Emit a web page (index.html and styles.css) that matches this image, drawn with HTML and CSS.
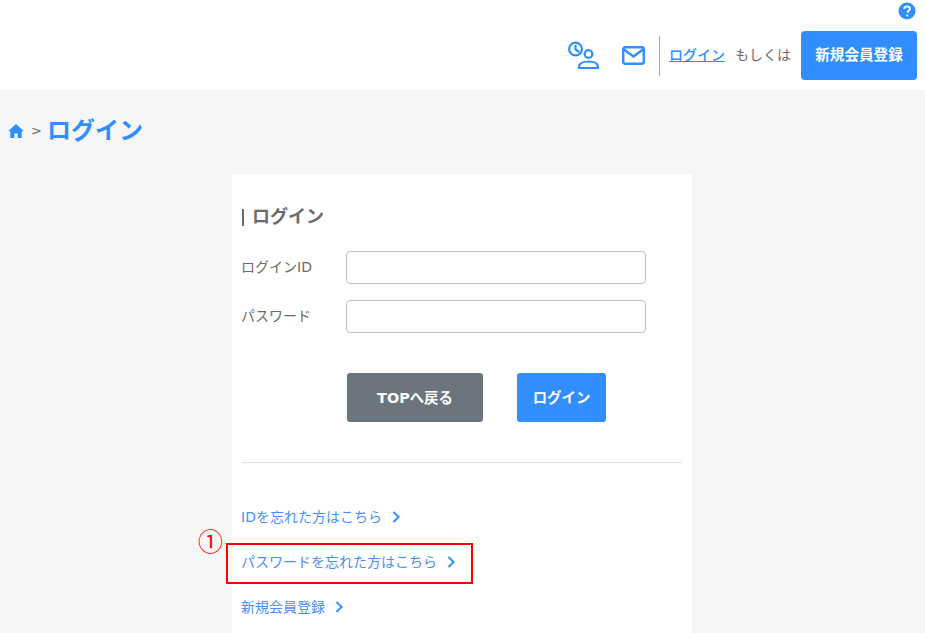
FILE: index.html
```html
<!DOCTYPE html>
<html lang="ja">
<head>
<meta charset="utf-8">
<title>ログイン</title>
<link rel="stylesheet" href="styles.css">
</head>
<body>
<header class="header">
  <div class="help-row">
    <svg class="help" viewBox="0 0 18 18" width="18" height="18"><circle cx="9" cy="9" r="8.500" fill="#308efe"/><path d="M6.200 7c0-1.700 1.200-2.700 2.900-2.700 1.600 0 2.800 1 2.800 2.400 0 2-2.500 2-2.500 4" fill="none" stroke="#fff" stroke-width="1.800"/><circle cx="9.300" cy="13.600" r="1.100" fill="#fff"/></svg>
  </div>
  <div class="nav">
    <svg class="icon-history" viewBox="0 0 32 30" width="32" height="30"><g fill="none" stroke="#308efe" stroke-width="2.200"><circle cx="7.500" cy="8" r="6.400"/><path d="M7.500 4v4.500l3.500 2.500"/><circle cx="20.500" cy="13" r="3.800"/><path d="M11 27v-1c0-3.500 4-5.500 9.500-5.500s9.500 2 9.500 5.500v1z"/></g></svg>
    <svg class="icon-mail" viewBox="0 0 23 19" width="23" height="19"><rect x="1.200" y="1.200" width="20.600" height="16.600" rx="2" fill="none" stroke="#308efe" stroke-width="2.400"/><path d="M2 3.500l9.500 7 9.500-7" fill="none" stroke="#308efe" stroke-width="2.400"/></svg>
    <div class="divider"></div>
    <a class="login-link" href="#">ログイン</a>
    <span class="or">もしくは</span>
    <a class="register" href="#">新規会員登録</a>
  </div>
</header>
<main class="main">
  <div class="crumbs">
    <svg class="home" viewBox="0 0 16 14" width="16" height="14"><path d="M8 0L0 7.300h2.300V14h4v-4.500h3.400V14h4V7.300H16z" fill="#308efe"/></svg>
    <span class="sep">&gt;</span>
    <h1 class="title">ログイン</h1>
  </div>
  <section class="card">
    <h2 class="card-title">ログイン</h2>
    <div class="field"><label class="label">ログインID</label><input class="input" type="text"></div>
    <div class="field"><label class="label">パスワード</label><input class="input" type="password"></div>
    <div class="buttons">
      <a class="btn btn-gray" href="#">TOPへ戻る</a>
      <a class="btn btn-blue" href="#">ログイン</a>
    </div>
    <hr class="rule">
    <ul class="links">
      <li class="link-row"><a class="link" href="#">IDを忘れた方はこちら<svg class="chev" viewBox="0 0 8 12" width="8" height="12"><path d="M1.500 1l5 5-5 5" fill="none" stroke="#308efe" stroke-width="2"/></svg></a></li>
      <li class="link-row"><a class="link" href="#">パスワードを忘れた方はこちら<svg class="chev" viewBox="0 0 8 12" width="8" height="12"><path d="M1.500 1l5 5-5 5" fill="none" stroke="#308efe" stroke-width="2"/></svg></a>
        <div class="highlight"></div><span class="mark">①</span></li>
      <li class="link-row"><a class="link" href="#">新規会員登録<svg class="chev" viewBox="0 0 8 12" width="8" height="12"><path d="M1.500 1l5 5-5 5" fill="none" stroke="#308efe" stroke-width="2"/></svg></a></li>
    </ul>
  </section>
</main>
</body>
</html>
```
FILE: styles.css
```css
* { box-sizing: border-box; }
html, body { margin: 0; height: 633px; overflow: hidden; }
body {
  background: #f5f6f6;
  color: #6b6b6b;
  font-family: "DejaVu Sans", "Noto Sans CJK JP", sans-serif;
  font-size: 14px;
}
.header { background: #fff; height: 90px; padding: 2px 8px 0; }
.help-row { display: flex; justify-content: flex-end; height: 18px; padding-right: 1px; }
.nav { display: flex; align-items: center; justify-content: flex-end; height: 49px; margin-top: 11px; }
.icon-history { margin-right: 22px; margin-top: 1px; }
.icon-mail { margin-right: 14px; }
.divider { width: 1px; height: 40px; background: #aaa; margin-right: 9px; }
.login-link { color: #308efe; font-size: 14px; font-weight: 500; margin-right: 10px; padding-bottom: 4px; }
.or { margin-right: 10px; color: #6b6b6b; padding-bottom: 4px; }
.register {
  display: flex; align-items: center; justify-content: center;
  width: 116px; height: 49px; padding-bottom: 4px; background: #308efe; color: #fff;
  border-radius: 4px; font-size: 14.6px; font-weight: 700; text-decoration: none;
}
.main { padding: 0 8px; }
.crumbs { display: flex; align-items: center; height: 80px; }
.home { margin-right: 7px; margin-top: 2px; }
.sep { font-size: 13px; margin-right: 5px; }
.title { margin: 1px 0 0; font-size: 24px; line-height: 36px; color: #308efe; font-weight: 700; }
.card {
  width: 460px; height: 459px; margin: 4px 0 0 224px; padding: 29px 9px 0;
  background: #fff; border-radius: 3px 3px 0 0;
}
.card-title {
  margin: 0 0 20px; font-size: 18px; line-height: 28px; font-weight: 700; color: #6b6b6b;
  display: flex; align-items: center;
}
.card-title::before { content: ""; width: 2px; height: 17px; background: #6b6b6b; margin: 0 8px 0 1px; }
.field { display: flex; align-items: center; height: 33px; margin-bottom: 16px; }
.label { width: 105px; font-size: 14px; padding-bottom: 4px; }
.input { width: 300px; height: 33px; border: 1px solid #bdbdcb; border-radius: 4px; background: #fff; }
.buttons { display: flex; margin: 40px 0 0 106px; gap: 34px; }
.btn {
  display: flex; align-items: center; justify-content: center; height: 49px; padding-bottom: 3px;
  border-radius: 3px; color: #fff; font-weight: 700; text-decoration: none; font-size: 14.4px;
}
.btn-gray { width: 136px; background: #6c757d; }
.btn-blue { width: 89px; background: #308efe; }
.rule { border: 0; border-top: 1px solid #e4e4e4; margin: 40px 0 0 1px; width: 440px; }
.links { list-style: none; margin: 32px 0 0; padding: 0; }
.link-row { position: relative; height: 45px; display: flex; align-items: center; }
.link { color: #4a90f2; text-decoration: none; display: flex; align-items: center; font-size: 14px; padding-bottom: 4px; }
.chev { margin-left: 10px; margin-top: 2px; }
.highlight { position: absolute; left: -15px; top: 3px; width: 247px; height: 41px; border: 2px solid #f00; }
.mark { position: absolute; left: -43px; top: -15px; font-size: 25px; line-height: 30px; color: #f00; font-family: "Noto Sans CJK JP", serif; }
```
